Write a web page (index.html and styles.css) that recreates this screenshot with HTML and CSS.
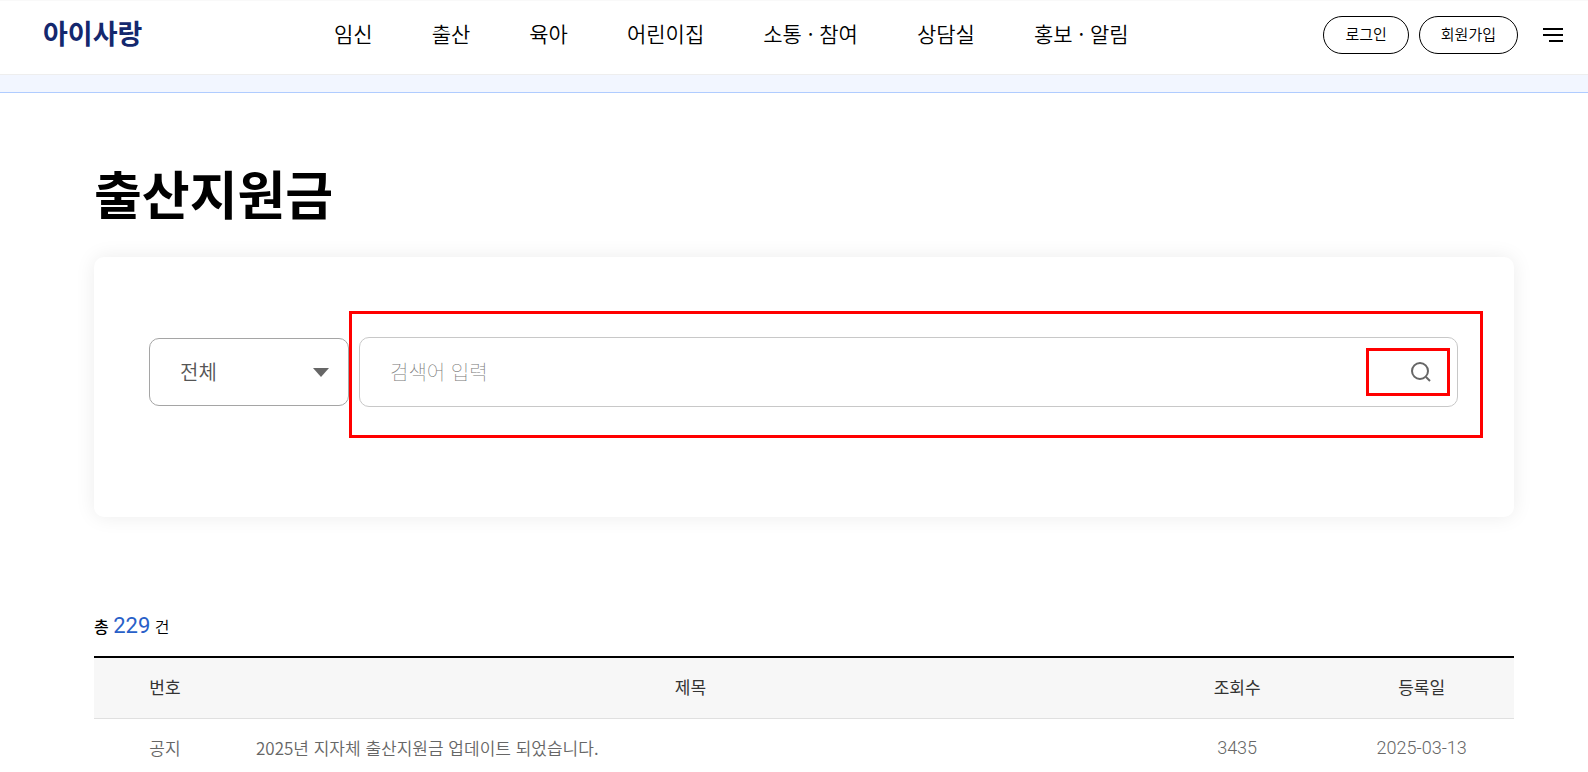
FILE: index.html
```html
<!DOCTYPE html>
<html lang="ko">

<head>
    <meta charset="UTF-8">
    <meta name="viewport" content="width=device-width, initial-scale=1.0">
    <title>출산지원금 - 아이사랑</title>
    <link rel="stylesheet" href="styles.css">
</head>

<body>
    <header class="header">
        <a href="#" class="logo">아이사랑</a>
        <nav class="nav">
            <a href="#">임신</a>
            <a href="#">출산</a>
            <a href="#">육아</a>
            <a href="#">어린이집</a>
            <a href="#">소통 · 참여</a>
            <a href="#">상담실</a>
            <a href="#">홍보 · 알림</a>
        </nav>
        <div class="user-menu">
            <a href="#" class="pill">로그인</a>
            <a href="#" class="pill">회원가입</a>
            <button type="button" class="menu-button" aria-label="전체메뉴">
                <svg width="20" height="14" viewBox="0 0 20 14" fill="none" stroke="#000" stroke-width="2">
                    <path d="M0 1h20M0 7h20M6 13h14" />
                </svg>
            </button>
        </div>
    </header>
    <div class="band"></div>

    <main class="container">
        <h1>출산지원금</h1>

        <form class="search-card">
            <div class="select-box">
                <select aria-label="검색 구분">
                    <option>전체</option>
                </select>
            </div>
            <div class="search-box">
                <input type="text" placeholder="검색어 입력" aria-label="검색어">
                <button type="button" class="search-button" aria-label="검색">
                    <svg width="20" height="20" viewBox="0 0 20 20" fill="none" stroke="#666" stroke-width="2">
                        <circle cx="9" cy="9" r="8" />
                        <path d="M15 15l4 4" />
                    </svg>
                </button>
            </div>
        </form>

        <p class="total"><b>총</b> <span class="count">229</span> 건</p>

        <table>
            <colgroup>
                <col class="col-no">
                <col>
                <col class="col-side">
                <col class="col-side">
            </colgroup>
            <thead>
                <tr>
                    <th>번호</th>
                    <th>제목</th>
                    <th>조회수</th>
                    <th>등록일</th>
                </tr>
            </thead>
            <tbody>
                <tr>
                    <td>공지</td>
                    <td class="subject"><a href="#">2025년 지자체 출산지원금 업데이트 되었습니다.</a></td>
                    <td class="number">3435</td>
                    <td class="number">2025-03-13</td>
                </tr>
            </tbody>
        </table>
    </main>
</body>

</html>
```
FILE: styles.css
```css
* {
    box-sizing: border-box;
}

body {
    margin: 0;
    background-color: #fff;
    color: #000;
    font-family: "Noto Sans CJK KR", sans-serif;
    font-size: 17px;
}

a {
    color: inherit;
    text-decoration: none;
}

input,
select,
button {
    font-family: inherit;
    background-color: transparent;
    border: none;
}

/* header */
.header {
    display: flex;
    align-items: center;
    height: 75px;
    padding: 0 25px 6px 43px;
    border-top: 1px solid #f9f9f9;
    border-bottom: 1px solid #eee;
}

.logo {
    width: 291px;
    padding-bottom: 4px;
    color: #14286e;
    font-size: 27px;
    font-weight: 700;
    line-height: 40px;
}

.nav {
    display: flex;
    flex: 1;
    gap: 59px;
    padding-bottom: 4px;
    font-size: 21px;
    font-weight: 350;
    line-height: 30px;
    white-space: nowrap;
}

.user-menu {
    display: flex;
    align-items: center;
    gap: 10px;
}

.pill {
    padding: 0 21px 2px;
    border: 1px solid #000;
    border-radius: 19px;
    font-size: 15px;
    font-weight: 350;
    line-height: 34px;
    white-space: nowrap;
}

.menu-button {
    display: flex;
    margin-left: 15px;
    padding: 0;
    cursor: pointer;
}

.band {
    height: 18px;
    background-color: #f2f6ff;
    border-bottom: 1px solid #b0ccff;
}

/* content */
.container {
    padding: 70px 74px 0 94px;
}

h1 {
    margin: 0 0 34px;
    font-size: 52px;
    font-weight: 700;
    line-height: 60px;
}

.search-card {
    display: flex;
    align-items: center;
    gap: 10px;
    padding: 80px 56px 110px 55px;
    border-radius: 10px;
    box-shadow: 0 0 20px rgba(0, 0, 0, 0.08);
}

.select-box {
    display: grid;
    align-items: center;
    width: 200px;
}

.select-box select {
    grid-area: 1 / 1;
    height: 68px;
    padding: 0 30px 2px;
    border: 1px solid #a5a5a5;
    border-radius: 10px;
    color: #555;
    font-size: 20px;
    font-weight: 350;
    appearance: none;
}

/* dropdown arrow */
.select-box::after {
    content: "";
    grid-area: 1 / 1;
    justify-self: end;
    margin-right: 20px;
    border: 8px solid transparent;
    border-top: 9px solid #666;
    border-bottom: none;
    pointer-events: none;
}

.search-box {
    position: relative;
    display: flex;
    flex: 1;
    align-items: center;
    height: 70px;
    border: 1px solid #c8c8c8;
    border-radius: 10px;
}

/* red frame around the search area */
.search-box::after {
    content: "";
    position: absolute;
    inset: -27px -26px -32px -11px;
    border: 3px solid #f00;
    pointer-events: none;
}

.search-box input {
    flex: 1;
    min-width: 0;
    height: 100%;
    padding: 0 30px 2px;
    font-size: 20px;
    font-weight: 300;
    outline: none;
}

.search-box input::placeholder {
    color: #777;
    font-weight: 100;
}

.search-button {
    display: flex;
    align-items: center;
    justify-content: flex-end;
    width: 84px;
    height: 48px;
    margin-right: 7px;
    padding: 0 16px;
    border: 3px solid #f00;
    cursor: pointer;
}

.total {
    margin: 94px 0 15px;
    font-size: 16px;
    font-weight: 350;
    line-height: 30px;
}

.total b {
    font-weight: 500;
}

.count {
    color: #2860c8;
    font-family: Roboto, sans-serif;
    font-size: 22px;
    font-weight: 400;
}

/* list */
table {
    width: 100%;
    table-layout: fixed;
    border-collapse: separate;
    border-spacing: 0;
    border-top: 2px solid #000;
}

.col-no {
    width: 10%;
}

.col-side {
    width: 13%;
}

th,
td {
    height: 61px;
    padding: 0 20px 4px;
    border-bottom: 1px solid #e0e0e0;
    text-align: center;
}

th {
    background-color: #f7f7f7;
    color: #333;
    font-weight: 400;
}

td {
    color: #666;
    font-weight: 350;
}

td.subject {
    text-align: left;
}

td.number {
    font-family: Roboto, sans-serif;
    font-size: 18px;
    font-weight: 300;
}
```
